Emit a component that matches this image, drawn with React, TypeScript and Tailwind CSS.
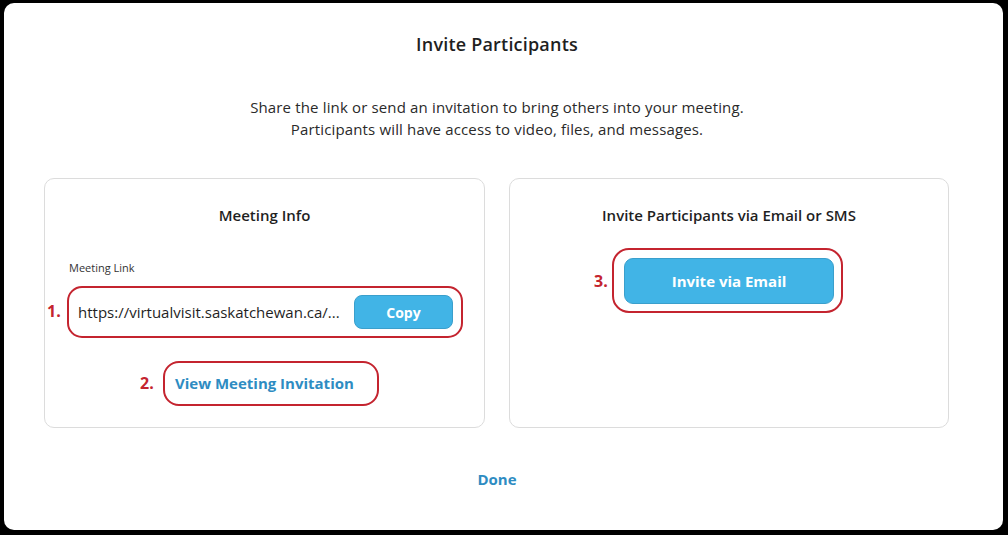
export default function App() {
  const font = { fontFamily: '"Open Sans", "Noto Sans", sans-serif' };

  return (
    <div className="w-[1008px] h-[535px] bg-black pt-[3px] pl-[4px] pr-[5px] pb-[5px]" style={font}>
      <div className="h-full bg-white rounded-[10px] flex flex-col pr-[13px]">
        {/* Header */}
        <h1 className="mt-[29px] text-center text-[18px] leading-[24px] font-semibold text-[#1f1f1f] tracking-[0.2px]">
          Invite Participants
        </h1>
        <p className="mt-[40px] text-center text-[15px] leading-[22px] text-[#2a2a2a] tracking-[0.15px]">
          Share the link or send an invitation to bring others into your meeting.
          <br />
          Participants will have access to video, files, and messages.
        </p>

        {/* Cards */}
        <div className="mt-[38px] pl-[40px] flex gap-[24px]">
          {/* Meeting info */}
          <div className="w-[441px] h-[250px] border border-[#dcdcdc] rounded-[10px] flex flex-col pt-[26px]">
            <h2 className="text-center text-[15px] leading-[20px] font-semibold text-[#1f1f1f]">Meeting Info</h2>
            <label className="ml-[24px] mt-[36px] text-[11px] leading-[14px] text-[#333]">Meeting Link</label>
            <div className="relative ml-[22px] mt-[11px] w-[396px] h-[52px] border-2 border-[#c4242f] rounded-[15px] flex items-center justify-between pl-[9px] pr-[8px]">
              <span className="absolute -left-[22px] top-[13px] text-[16px] leading-[20px] font-bold text-[#c4242f]">1.</span>
              <span className="text-[15px] text-[#1f1f1f]">https://virtualvisit.saskatchewan.ca/...</span>
              <button className="w-[99px] h-[34px] rounded-[8px] bg-[#41b4e6] border border-[#3a9fcc] text-white text-[14px] font-bold">
                Copy
              </button>
            </div>
            <div className="relative ml-[118px] mt-[23px] w-[216px] h-[45px] border-2 border-[#c4242f] rounded-[16px] flex items-center pl-[10px]">
              <span className="absolute -left-[25px] top-[10px] text-[16px] leading-[20px] font-bold text-[#c4242f]">2.</span>
              <span className="text-[15px] font-bold text-[#2e8cc2]">View Meeting Invitation</span>
            </div>
          </div>

          {/* Invite via email */}
          <div className="w-[440px] h-[250px] border border-[#dcdcdc] rounded-[10px] flex flex-col pt-[26px]">
            <h2 className="text-center text-[15px] leading-[20px] font-semibold text-[#1f1f1f]">
              Invite Participants via Email or SMS
            </h2>
            <div className="relative ml-[102px] mt-[23px] w-[231px] h-[65px] border-2 border-[#c4242f] rounded-[17px] pl-[10px] pt-[8px]">
              <span className="absolute -left-[20px] top-[21px] text-[16px] leading-[20px] font-bold text-[#c4242f]">3.</span>
              <button className="w-[210px] h-[46px] rounded-[9px] bg-[#41b4e6] border border-[#3a9fcc] text-white text-[15px] font-bold">
                Invite via Email
              </button>
            </div>
          </div>
        </div>

        {/* Footer */}
        <button className="mt-[41px] self-center text-[15px] leading-[20px] font-bold text-[#2e8cc2]">Done</button>
      </div>
    </div>
  );
}
